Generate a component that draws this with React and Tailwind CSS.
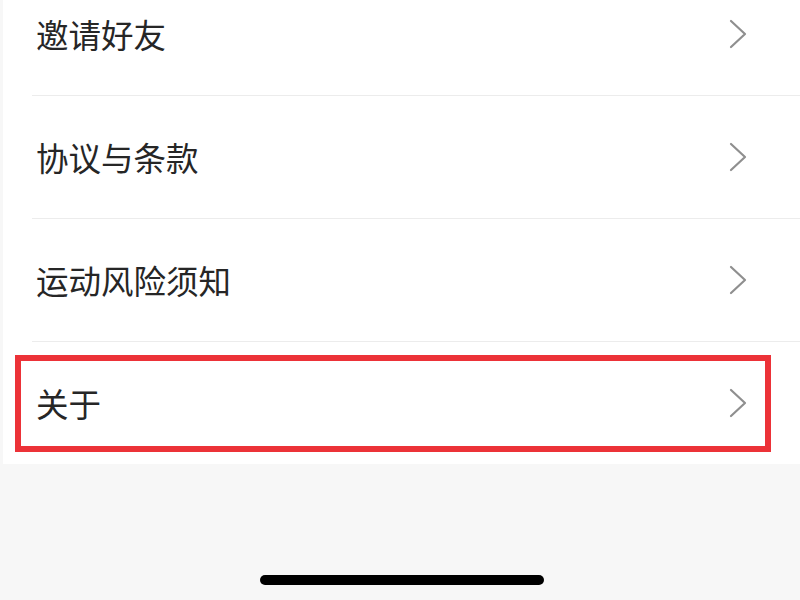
import React from "react";

const items = ["邀请好友", "协议与条款", "运动风险须知", "关于"];

function Chevron() {
  return (
    <svg width="18" height="30" viewBox="0 0 18 30" fill="none">
      <polyline points="2,2 16,15 2,28" stroke="#8f8f8f" strokeWidth="2.2" strokeLinecap="round" strokeLinejoin="round" />
    </svg>
  );
}

export default function App() {
  return (
    <div
      className="w-[800px] h-[600px] overflow-hidden bg-[#f7f7f7] flex flex-col"
      style={{ fontFamily: '"Noto Sans CJK SC", "Noto Sans", sans-serif' }}
    >
      <div className="ml-[3px] bg-white -mt-[27px] flex flex-col">
        {items.map((t, i) => (
          <div key={t} className="relative flex flex-col">
            <div className="h-[122px] flex items-center justify-between pl-[33px] pr-[53px]">
              <span className="text-[32.5px] leading-none text-[#262626]">{t}</span>
              <Chevron />
            </div>
            {i < items.length - 1 && <div className="ml-[29px] h-px bg-[#ececec]" />}
            {i === items.length - 1 && (
              <div className="absolute left-[12px] top-[13px] w-[756px] h-[97px] border-[6px] border-[#ec3238]" />
            )}
          </div>
        ))}
      </div>
      <div className="flex-1 flex flex-col items-center">
        <div className="mt-[111px] ml-[4px] w-[284px] h-[10px] rounded-full bg-black" />
      </div>
    </div>
  );
}
